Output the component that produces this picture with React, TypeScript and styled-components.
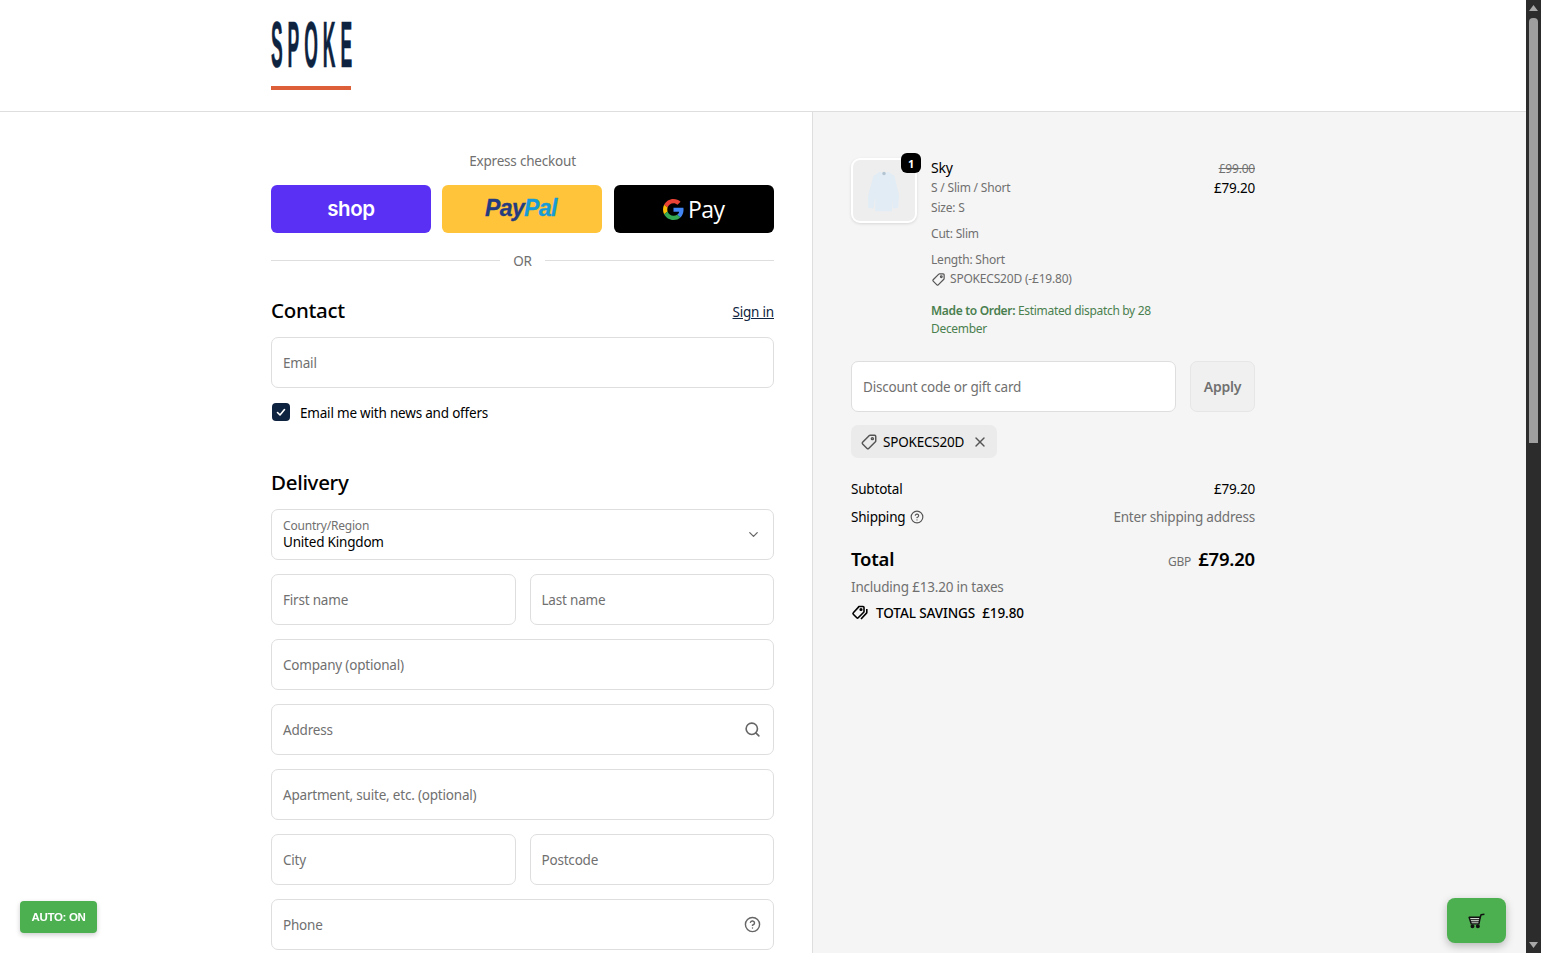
import React from 'react';
import styled, {createGlobalStyle} from 'styled-components';
import {ChevronDown, CircleHelp, Search, X} from 'lucide-react';

const GlobalStyle = createGlobalStyle`
	html, body {
		margin: 0;
		height: 100%;
		overflow: hidden;
	}

	body {
		font-family: 'Noto Sans', 'Open Sans', Arial, sans-serif;
		font-size: 13.5px;
		letter-spacing: -0.2px;
		color: #000;
		background: #fff;
	}

	* {
		box-sizing: border-box;
	}
`;

const Window = styled.div`
	display: flex;
	height: 953px;
	overflow: hidden;
`;

const Page = styled.div`
	flex: 1;
	min-width: 0;
	display: flex;
	flex-direction: column;
`;

const ScrollBar = styled.div`
	width: 15px;
	background: #2c2c2c;
	display: flex;
	flex-direction: column;
	align-items: center;
	justify-content: space-between;
	padding: 5px 0;
`;

const ScrollTop = styled.div`
	display: flex;
	flex-direction: column;
	align-items: center;
	gap: 7px;
`;

const ScrollThumb = styled.div`
	width: 9px;
	height: 425px;
	background: #9f9f9f;
	border-radius: 4px 4px 0 0;
`;

const Header = styled.header`
	height: 112px;
	flex-shrink: 0;
	border-bottom: 1px solid #dedede;
	padding: 21px 0 0 271px;
`;

const Logo = styled.div`
	width: 80px;
	display: flex;
	flex-direction: column;
	gap: 18px;
`;

const LogoUnderline = styled.div`
	height: 4px;
	background: #dd5f3a;
`;

const Main = styled.main`
	flex: 1;
	display: flex;
	min-height: 0;
`;

const Left = styled.section`
	width: 813px;
	flex-shrink: 0;
	border-right: 1px solid #dedede;
	padding: 39px 38px 0 271px;
`;

const Right = styled.aside`
	flex: 1;
	background: #f5f5f5;
	padding: 46px 0 0 38px;
`;

const ExpressTitle = styled.div`
	text-align: center;
	line-height: 20px;
	color: #707070;
`;

const ExpressRow = styled.div`
	display: grid;
	grid-template-columns: 160px 160px 160px;
	column-gap: 11.4px;
	margin-top: 14px;
`;

const PayButton = styled.button<{$bg: string}>`
	height: 48px;
	border: 0;
	border-radius: 6px;
	background: ${(p) => p.$bg};
	display: flex;
	align-items: center;
	justify-content: center;
	padding: 0;
`;

const ShopText = styled.span`
	font-family: Inter, 'Noto Sans', sans-serif;
	font-weight: 600;
	font-size: 20.5px;
	letter-spacing: -0.4px;
	color: #fff;
	margin-bottom: 2px;
`;

const PayPalLogo = styled.span`
	display: flex;
	margin-right: 3px;
	margin-bottom: 2px;
`;

const PayPalText = styled.span<{$color: string}>`
	font-family: 'Liberation Sans', Arial, sans-serif;
	font-style: italic;
	font-weight: 700;
	font-size: 23px;
	letter-spacing: -0.6px;
	color: ${(p) => p.$color};
	-webkit-text-stroke: 0.3px ${(p) => p.$color};
`;

const GPayText = styled.span`
	font-family: 'Open Sans', sans-serif;
	font-size: 23px;
	letter-spacing: -0.5px;
	color: #fff;
	margin-left: 4px;
`;

const OrRow = styled.div`
	display: flex;
	align-items: center;
	gap: 13px;
	margin-top: 18px;
	line-height: 20px;
	color: #707070;
`;

const OrLine = styled.div`
	flex: 1;
	height: 1px;
	margin-bottom: 2px;
	background: #dedede;
`;

const SectionHead = styled.div<{$top: number}>`
	display: flex;
	align-items: center;
	justify-content: space-between;
	height: 28px;
	margin: ${(p) => p.$top}px 0 13px;
`;

const Heading = styled.h2`
	margin: 0;
	font-size: 20.5px;
	font-weight: 500;
	letter-spacing: -0.3px;
	line-height: 28px;
`;

const SignIn = styled.a`
	color: #0d2340;
	text-decoration: underline;
	position: relative;
	top: 2px;
`;

const Field = styled.div`
	min-width: 0;
	height: 51px;
	background: #fff;
	border: 1px solid #dedede;
	border-radius: 7px;
	padding: 0 12px 0 11px;
	display: flex;
	align-items: center;
	justify-content: space-between;
`;

const Placeholder = styled.span`
	color: #707070;
`;

const Fields = styled.div`
	display: flex;
	flex-direction: column;
	gap: 14px;
`;

const FieldRow = styled.div`
	display: grid;
	grid-template-columns: 1fr 1fr;
	gap: 14px;
`;

const CheckRow = styled.label`
	display: flex;
	align-items: center;
	gap: 10px;
	margin-top: 15px;
	height: 18px;
	padding-left: 1px;
`;

const CheckBox = styled.span`
	width: 18px;
	height: 18px;
	border-radius: 4px;
	background: #0d2340;
	display: flex;
	align-items: center;
	justify-content: center;
`;

const CheckLabel = styled.span`
	margin-top: 2px;
`;

const SelectText = styled.div`
	display: flex;
	flex-direction: column;
`;

const SelectLabel = styled.span`
	font-size: 12px;
	line-height: 15px;
	color: #707070;
`;

const SelectValue = styled.span`
	line-height: 18px;
`;

const ItemRow = styled.div`
	width: 404px;
	display: flex;
	gap: 14px;
`;

const Thumb = styled.div`
	position: relative;
	width: 66px;
	height: 65px;
	flex-shrink: 0;
	background: #eeeeee;
	border: 2px solid #fff;
	border-radius: 9px;
	box-shadow: 0 1px 3px rgba(0, 0, 0, 0.12);
	display: flex;
	align-items: center;
	justify-content: center;
`;

const Badge = styled.span`
	position: absolute;
	top: -7px;
	right: -6px;
	width: 20px;
	height: 20px;
	border-radius: 6px;
	background: #000;
	color: #fff;
	font-size: 11px;
	font-weight: 700;
	display: flex;
	align-items: center;
	justify-content: center;
`;

const ItemInfo = styled.div`
	flex: 1;
	min-width: 0;
`;

const ItemName = styled.div`
	font-size: 14px;
	line-height: 20px;
`;

const ItemMeta = styled.div<{$top?: number}>`
	font-size: 12px;
	line-height: 20px;
	color: #707070;
	margin-top: ${(p) => p.$top ?? 0}px;
`;

const ItemDiscount = styled(ItemMeta)`
	display: flex;
	align-items: center;
	gap: 4px;
`;

const MadeToOrder = styled.div`
	margin-top: 13px;
	font-size: 12px;
	line-height: 18px;
	letter-spacing: -0.32px;
	color: #4a7f4f;
`;

const MadeToOrderLabel = styled.span`
	font-weight: 600;
`;

const Prices = styled.div`
	text-align: right;
	flex-shrink: 0;
`;

const OldPrice = styled.div`
	font-size: 12px;
	line-height: 21px;
	color: #707070;
	text-decoration: line-through;
`;

const Price = styled.div`
	line-height: 19px;
`;

const DiscountRow = styled.div`
	width: 404px;
	display: grid;
	grid-template-columns: 1fr 65px;
	gap: 14px;
	margin-top: 23px;
`;

const ApplyButton = styled.button`
	height: 51px;
	border: 1px solid #e6e6e6;
	border-radius: 7px;
	background: #f0f0f0;
	color: #707070;
	font-family: inherit;
	font-size: 14px;
	font-weight: 600;
	letter-spacing: -0.2px;
	padding: 0;
`;

const Chip = styled.div`
	display: inline-flex;
	align-items: center;
	height: 33px;
	margin-top: 13px;
	padding: 0 9px;
	border-radius: 7px;
	background: #ebebeb;
	gap: 5px;
`;

const ChipClose = styled.span`
	display: flex;
	margin-left: 3px;
	color: #555;
`;

const Summary = styled.div`
	width: 404px;
	margin-top: 17px;
`;

const SummaryRow = styled.div<{$top?: number}>`
	display: flex;
	align-items: center;
	justify-content: space-between;
	height: 28px;
	margin-top: ${(p) => p.$top ?? 0}px;
`;

const ShippingLabel = styled.span`
	display: flex;
	align-items: center;
	gap: 5px;
`;

const Muted = styled.span`
	color: #707070;
`;

const TotalLabel = styled.span`
	font-size: 18.5px;
	font-weight: 600;
`;

const TotalValue = styled.span`
	display: flex;
	align-items: baseline;
	gap: 7px;
`;

const Currency = styled.span`
	font-size: 12px;
	color: #707070;
`;

const Amount = styled.span`
	font-size: 18.5px;
	font-weight: 600;
`;

const Savings = styled.div`
	display: flex;
	align-items: center;
	gap: 7px;
	height: 24px;
	font-weight: 500;
	letter-spacing: -0.08px;
`;

const AutoBadge = styled.button`
	position: fixed;
	left: 20px;
	top: 901px;
	width: 77px;
	height: 32px;
	border: 0;
	border-radius: 4px;
	background: #4caf50;
	color: #fff;
	font-family: 'Liberation Sans', Arial, sans-serif;
	font-size: 11.5px;
	font-weight: 700;
	letter-spacing: -0.3px;
	box-shadow: 0 2px 5px rgba(0, 0, 0, 0.2);
	padding: 0;
`;

const CartButton = styled.button`
	position: fixed;
	left: 1447px;
	top: 898px;
	width: 59px;
	height: 45px;
	border: 0;
	border-radius: 8px;
	background: #4caf50;
	box-shadow: 0 3px 8px rgba(0, 0, 0, 0.25);
	display: flex;
	align-items: center;
	justify-content: center;
	padding: 0;
`;

const TagIcon = ({size = 16, color = '#555'}: {size?: number; color?: string}) => (
	<svg width={size} height={size} viewBox="0 0 16 16" fill="none" stroke={color} strokeWidth="1.3">
		<path d="M9 2h4a1 1 0 0 1 1 1v4a1 1 0 0 1-.3.7l-6 6a1 1 0 0 1-1.4 0l-4-4a1 1 0 0 1 0-1.4l6-6A1 1 0 0 1 9 2z" />
		<circle cx="11" cy="5" r="0.9" />
	</svg>
);

const SavingsIcon = () => (
	<svg width="18" height="18" viewBox="0 0 18 18" fill="none" stroke="#000" strokeWidth="1.6">
		<path d="M8 2.5h4a1 1 0 0 1 1 1v4a1 1 0 0 1-.3.7l-5.5 5.5a1 1 0 0 1-1.4 0l-3.5-3.5a1 1 0 0 1 0-1.4l5-5.5A1 1 0 0 1 8 2.5z" />
		<circle cx="10" cy="5.5" r="0.8" />
		<path d="M15.8 5v3.4a1 1 0 0 1-.3.7L10 15" />
	</svg>
);

const CartIcon = () => (
	<svg width="19" height="19" viewBox="0 0 18 18" fill="#cfd8cf" stroke="#111" strokeWidth="1.4" strokeLinejoin="round">
		<path d="M2 6h10.5l-1.2 6.2H4z" />
		<path d="M12.3 7l1-3.4L16.5 3" fill="none" />
		<path d="M3 8.2h9M3.5 10.2h8" fill="none" strokeWidth="0.9" />
		<circle cx="5.2" cy="14.5" r="1.2" fill="#111" />
		<circle cx="10.3" cy="14.5" r="1.2" fill="#111" />
	</svg>
);

const GoogleG = () => (
	<svg width="21" height="21" viewBox="0 0 48 48">
		<path fill="#EA4335" d="M24 9.5c3.54 0 6.71 1.22 9.21 3.6l6.85-6.85C35.9 2.38 30.47 0 24 0 14.62 0 6.51 5.38 2.56 13.22l7.98 6.19C12.43 13.72 17.74 9.5 24 9.5z" />
		<path fill="#4285F4" d="M46.98 24.55c0-1.57-.15-3.09-.38-4.55H24v9.02h12.94c-.58 2.96-2.26 5.48-4.78 7.18l7.73 6c4.51-4.18 7.09-10.36 7.09-17.65z" />
		<path fill="#FBBC05" d="M10.53 28.59c-.48-1.45-.76-2.99-.76-4.59s.27-3.14.76-4.59l-7.98-6.19C.92 16.46 0 20.12 0 24c0 3.88.92 7.54 2.56 10.78l7.97-6.19z" />
		<path fill="#34A853" d="M24 48c6.48 0 11.93-2.13 15.89-5.81l-7.73-6c-2.15 1.45-4.92 2.3-8.16 2.3-6.26 0-11.57-4.22-13.47-9.91l-7.98 6.19C6.51 42.62 14.62 48 24 48z" />
	</svg>
);

// wordmark: stretched viewBox squeezes the text into the narrow logo shape
const LogoMark = () => (
	<svg width="80" height="47" viewBox="0 0 292 47" preserveAspectRatio="none" overflow="visible">
		<text
			x="0"
			y="46"
			letterSpacing="18"
			fontFamily="'Liberation Sans', Arial, sans-serif"
			fontWeight="700"
			fontSize="64"
			fill="#0d2340"
			stroke="#0d2340"
			strokeWidth="0.5"
			vectorEffect="non-scaling-stroke"
		>
			SPOKE
		</text>
	</svg>
);

const ShirtImage = () => (
	<svg width="38" height="44" viewBox="0 0 42 50">
		<path d="M16 3l5 2 5-2 7 5 5 22-1 14-6 1-1-14v17H11V31l-2 14-6-1 0-14 6-22z" fill="#e1ecf5" />
		<circle cx="21" cy="5" r="2" fill="#b4c5d2" />
	</svg>
);

const ScrollArrow = ({down}: {down?: boolean}) => (
	<svg width="9" height="6" viewBox="0 0 9 6">
		<path d={down ? 'M0 0h9L4.5 6z' : 'M4.5 0L9 6H0z'} fill="#a8a8a8" />
	</svg>
);

const TextField = ({label, icon}: {label: string; icon?: React.ReactNode}) => (
	<Field>
		<Placeholder>{label}</Placeholder>
		{icon}
	</Field>
);

const App = () => {
	return (
		<Window>
			<GlobalStyle />
			<Page>
				<Header>
					<Logo>
						<LogoMark />
						<LogoUnderline />
					</Logo>
				</Header>
				<Main>
					<Left>
						<ExpressTitle>Express checkout</ExpressTitle>
						<ExpressRow>
							<PayButton $bg="#5a31f4">
								<ShopText>shop</ShopText>
							</PayButton>
							<PayButton $bg="#ffc439">
								<PayPalLogo>
									<PayPalText $color="#253b80">Pay</PayPalText>
									<PayPalText $color="#179bd7">Pal</PayPalText>
								</PayPalLogo>
							</PayButton>
							<PayButton $bg="#000">
								<GoogleG />
								<GPayText>Pay</GPayText>
							</PayButton>
						</ExpressRow>
						<OrRow>
							<OrLine />
							OR
							<OrLine />
						</OrRow>

						<SectionHead $top={25}>
							<Heading>Contact</Heading>
							<SignIn>Sign in</SignIn>
						</SectionHead>
						<TextField label="Email" />
						<CheckRow>
							<CheckBox>
								<svg width="12" height="12" viewBox="0 0 12 12" fill="none" stroke="#fff" strokeWidth="1.6" strokeLinecap="round" strokeLinejoin="round">
									<path d="M2.5 6.5L5 9l4.5-5.5" />
								</svg>
							</CheckBox>
							<CheckLabel>Email me with news and offers</CheckLabel>
						</CheckRow>

						<SectionHead $top={47}>
							<Heading>Delivery</Heading>
						</SectionHead>
						<Fields>
							<Field>
								<SelectText>
									<SelectLabel>Country/Region</SelectLabel>
									<SelectValue>United Kingdom</SelectValue>
								</SelectText>
								<ChevronDown size={15} color="#666" />
							</Field>
							<FieldRow>
								<TextField label="First name" />
								<TextField label="Last name" />
							</FieldRow>
							<TextField label="Company (optional)" />
							<TextField label="Address" icon={<Search size={17} strokeWidth={2.3} color="#666" />} />
							<TextField label="Apartment, suite, etc. (optional)" />
							<FieldRow>
								<TextField label="City" />
								<TextField label="Postcode" />
							</FieldRow>
							<TextField label="Phone" icon={<CircleHelp size={17} color="#666" />} />
						</Fields>
					</Left>

					<Right>
						<ItemRow>
							<Thumb>
								<ShirtImage />
								<Badge>1</Badge>
							</Thumb>
							<ItemInfo>
								<ItemName>Sky</ItemName>
								<ItemMeta>S / Slim / Short</ItemMeta>
								<ItemMeta>Size: S</ItemMeta>
								<ItemMeta $top={6}>Cut: Slim</ItemMeta>
								<ItemMeta $top={6}>Length: Short</ItemMeta>
								<ItemDiscount $top={-1}>
									<TagIcon size={15} />
									SPOKECS20D (-£19.80)
								</ItemDiscount>
								<MadeToOrder>
									<MadeToOrderLabel>Made to Order:</MadeToOrderLabel> Estimated dispatch by 28
									<br />
									December
								</MadeToOrder>
							</ItemInfo>
							<Prices>
								<OldPrice>£99.00</OldPrice>
								<Price>£79.20</Price>
							</Prices>
						</ItemRow>

						<DiscountRow>
							<TextField label="Discount code or gift card" />
							<ApplyButton>Apply</ApplyButton>
						</DiscountRow>
						<Chip>
							<TagIcon size={18} />
							SPOKECS20D
							<ChipClose>
								<X size={16} />
							</ChipClose>
						</Chip>

						<Summary>
							<SummaryRow>
								Subtotal
								<span>£79.20</span>
							</SummaryRow>
							<SummaryRow>
								<ShippingLabel>
									Shipping
									<CircleHelp size={14} color="#555" />
								</ShippingLabel>
								<Muted>Enter shipping address</Muted>
							</SummaryRow>
							<SummaryRow $top={13}>
								<TotalLabel>Total</TotalLabel>
								<TotalValue>
									<Currency>GBP</Currency>
									<Amount>£79.20</Amount>
								</TotalValue>
							</SummaryRow>
							<SummaryRow $top={1}>
								<Muted>Including £13.20 in taxes</Muted>
							</SummaryRow>
							<Savings>
								<SavingsIcon />
								TOTAL SAVINGS
								<span>£19.80</span>
							</Savings>
						</Summary>
					</Right>
				</Main>
			</Page>
			<ScrollBar>
				<ScrollTop>
					<ScrollArrow />
					<ScrollThumb />
				</ScrollTop>
				<ScrollArrow down />
			</ScrollBar>
			<AutoBadge>AUTO: ON</AutoBadge>
			<CartButton>
				<CartIcon />
			</CartButton>
		</Window>
	);
};

export default App;
